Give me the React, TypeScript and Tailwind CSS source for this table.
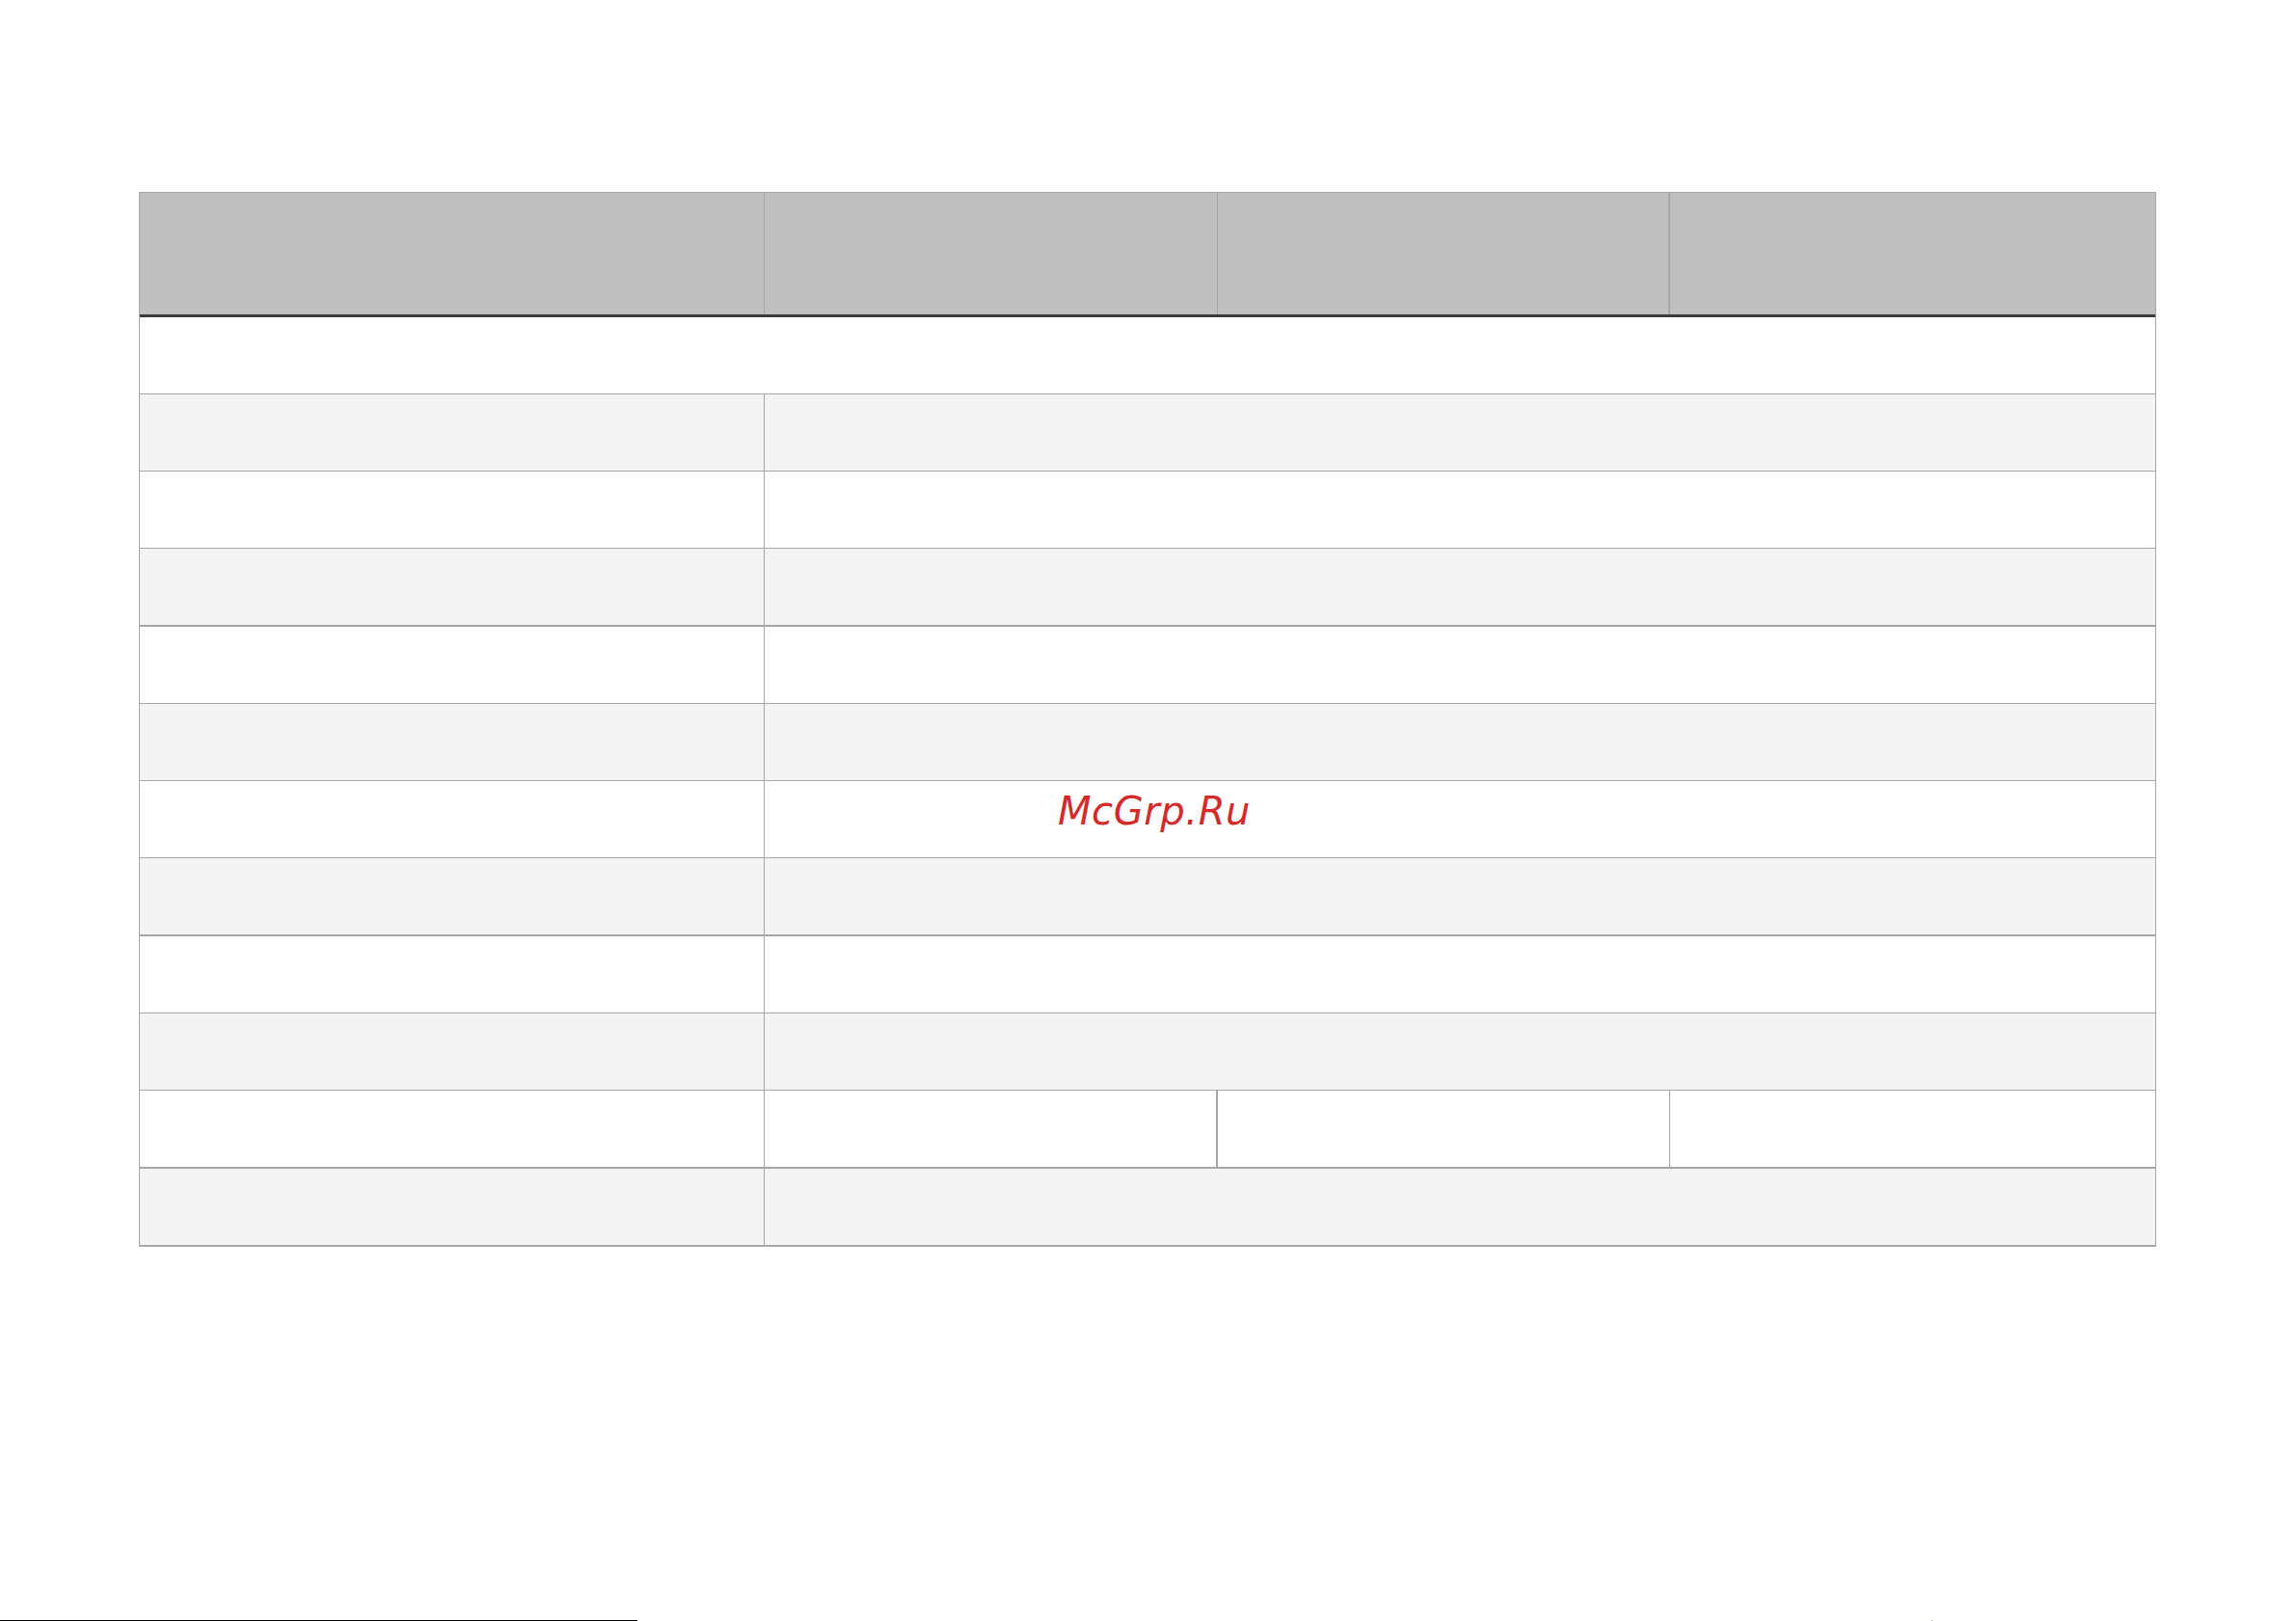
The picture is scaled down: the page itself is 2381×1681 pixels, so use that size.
import React from 'react'

type Row = { kind: 'full' | 'split' | 'quad'; shade: boolean; thick?: boolean }

const rows: Row[] = [
  { kind: 'full', shade: false },
  { kind: 'split', shade: true },
  { kind: 'split', shade: false },
  { kind: 'split', shade: true, thick: true },
  { kind: 'split', shade: false },
  { kind: 'split', shade: true },
  { kind: 'split', shade: false },
  { kind: 'split', shade: true, thick: true },
  { kind: 'split', shade: false },
  { kind: 'split', shade: true },
  { kind: 'quad', shade: false, thick: true },
  { kind: 'split', shade: true, thick: true },
]

export default function App() {
  return (
    <div className="relative w-[2381px] h-[1681px] bg-white flex flex-col overflow-hidden" style={{ fontFamily: '"DejaVu Sans", sans-serif' }}>
      {/* Table */}
      <div className="pt-[199px] pl-[144px]">
        <div className="w-[2092px] border-l border-r border-[#a6a6a6]">
          {/* Header */}
          <div className="flex h-[130px] bg-[#bfc0bf] border-t border-[#a6a6a6] border-b-[3px] border-b-[#3c3c3c]">
            <div className="w-[648px] border-r border-[#a6a6a6]" />
            <div className="w-[470px] border-r border-[#a6a6a6]" />
            <div className="w-[469px] border-r-2 border-[#a6a6a6]" />
            <div className="flex-1" />
          </div>

          {/* Body */}
          {rows.map((row, i) => (
            <div
              key={i}
              className={`flex ${row.thick ? 'h-[81px] border-b-2' : 'h-[80px] border-b'} border-[#a6a6a6] ${row.shade ? 'bg-[#f4f4f4]' : 'bg-white'}`}
            >
              {row.kind === 'full' && <div className="flex-1" />}
              {row.kind === 'split' && (
                <>
                  <div className="w-[648px] border-r border-[#a6a6a6]" />
                  <div className="flex-1" />
                </>
              )}
              {row.kind === 'quad' && (
                <>
                  <div className="w-[648px] border-r border-[#a6a6a6]" />
                  <div className="w-[470px] border-r-2 border-[#a6a6a6]" />
                  <div className="w-[469px] border-r border-[#a6a6a6]" />
                  <div className="flex-1" />
                </>
              )}
            </div>
          ))}
        </div>
      </div>

      {/* Watermark */}
      <div className="absolute left-[1097px] top-[821px] text-[40px] leading-none italic tracking-[0.6px] text-[#d42a2a]">
        McGrp.Ru
      </div>

      {/* Footnote rule */}
      <div className="mt-auto flex items-end">
        <div className="w-[661px] h-px bg-black" />
        <div className="ml-[1342px] w-px h-px bg-[#22d3ee]" />
      </div>
    </div>
  )
}
